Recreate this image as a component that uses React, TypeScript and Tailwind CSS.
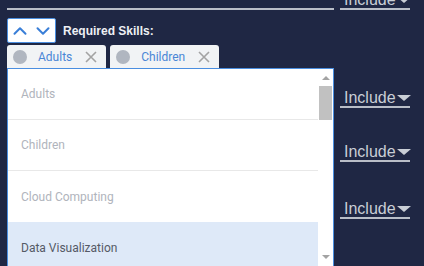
import { ChevronUp, ChevronDown } from "lucide-react";

const options = [
  { label: "Adults", active: false },
  { label: "Children", active: false },
  { label: "Cloud Computing", active: false },
  { label: "Data Visualization", active: true },
];

function IncludeSelect({ className = "" }: { className?: string }) {
  return (
    <div
      className={`flex items-center h-[19px] w-[70px] border-b-2 border-[#b9bec8] pl-[4px] ${className}`}>
      <span className="text-[16px] leading-[18px] text-[#c9ced6] font-['Liberation_Sans',Arial,sans-serif]">
        Include
      </span>
      <span className="ml-[1px] w-0 h-0 border-l-[7px] border-r-[7px] border-t-[6px] border-l-transparent border-r-transparent border-t-[#c9ced6]" />
    </div>
  );
}

function Chip({ label }: { label: string }) {
  return (
    <div className="flex items-center h-[23px] bg-[#f1f3f5] rounded-t-[3px] pl-[6px] pr-[9px]">
      <span className="w-[14px] h-[14px] rounded-full bg-[#b0b6c0]" />
      <span className="ml-[11px] text-[12px] text-[#4a86d6]">{label}</span>
      <svg className="ml-[13px]" width="12" height="12" viewBox="0 0 12 12">
        <path d="M1 1L11 11M11 1L1 11" stroke="#a3a3a3" strokeWidth="1.6" />
      </svg>
    </div>
  );
}

export default function App() {
  return (
    <div className="w-[424px] h-[266px] overflow-hidden bg-[#1f2744] font-['Roboto','Liberation_Sans',sans-serif]">
      {/* top row: input line + include select */}
      <div className="flex items-end -mt-[9px] pl-[7px]">
        <div className="w-[327px] border-b-2 border-[#b9bec8]" />
        <IncludeSelect className="ml-[6px]" />
      </div>

      <div className="flex pl-[7px]">
        <div className="w-[327px] flex flex-col">
          <div className="flex items-center mt-[8px]">
            <div className="flex items-center justify-center gap-[1px] w-[49px] h-[25px] bg-white border border-[#4a8ee0] rounded-[2px]">
              <ChevronUp className="w-[22px] h-[22px] text-[#3a7fd8]" strokeWidth={2.2} />
              <ChevronDown className="w-[22px] h-[22px] text-[#3a7fd8]" strokeWidth={2.2} />
            </div>
            <span className="ml-[7px] text-[12px] font-bold text-[#eef0f4] font-['Liberation_Sans',Arial,sans-serif]">
              Required Skills:
            </span>
          </div>

          <div className="flex gap-[4px] mt-[2px]">
            <Chip label="Adults" />
            <Chip label="Children" />
          </div>

          <div className="flex h-[210px] bg-white border border-[#4a8ee0]">
            <div className="flex-1 flex flex-col">
              {options.map((o, i) => (
                <div
                  key={o.label}
                  className={`flex items-center h-[51px] shrink-0 pl-[13px] text-[12px] ${
                    o.active
                      ? "bg-[#dee9f8] text-[#555a66]"
                      : "text-[#b0b4bc]"
                  } ${i < options.length - 2 ? "border-b border-[#e8e8e8]" : ""}`}>
                  {o.label}
                </div>
              ))}
            </div>
            <div className="w-[15px] flex flex-col items-center pt-[7px]">
              <span className="w-0 h-0 border-l-[4px] border-r-[4px] border-b-[4px] border-l-transparent border-r-transparent border-b-[#a3a3a3]" />
              <div className="w-[13px] h-[34px] mt-[6px] bg-[#c1c1c1]" />
              <span className="mt-[135px] w-0 h-0 border-l-[4px] border-r-[4px] border-t-[4px] border-l-transparent border-r-transparent border-t-[#a3a3a3]" />
            </div>
          </div>
        </div>

        <div className="flex flex-col ml-[6px]">
          <IncludeSelect className="mt-[79px]" />
          <IncludeSelect className="mt-[35px]" />
          <IncludeSelect className="mt-[38px]" />
        </div>
      </div>
    </div>
  );
}
